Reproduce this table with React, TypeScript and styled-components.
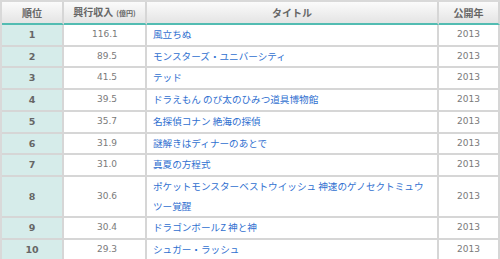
import React from "react";
import styled, { createGlobalStyle } from "styled-components";

const Global = createGlobalStyle`
  html, body { margin: 0; padding: 0; background: #ffffff; }
`;

const Table = styled.table`
  width: 500px;
  border-spacing: 0;
  border-top: 2px solid #d9d9d9;
  border-left: 2px solid #d9d9d9;
  table-layout: fixed;
  font-family: "DejaVu Sans", Verdana, "Noto Sans CJK JP", sans-serif;
  font-size: 9px;
`;

const Th = styled.th<{ $w?: number }>`
  ${(p) => (p.$w ? `width: ${p.$w}px;` : "")}
  height: 20px;
  padding: 0;
  background: linear-gradient(#fbfbfb, #e4e4e4);
  border-right: 2px solid #d6d6d6;
  border-bottom: 2px solid #52bcb2;
  color: #666;
  font-family: "Noto Sans CJK JP", sans-serif;
  font-weight: bold;
  font-size: 10px;
  line-height: 20px;
  text-align: center;
`;

const Small = styled.span`
  font-size: 7px;
  margin-left: 3px;
`;

const Td = styled.td<{ $kind: "rank" | "num" | "title" | "year" }>`
  padding: 0 ${(p) => (p.$kind === "title" ? "6px" : p.$kind === "num" ? "28px" : "0")};
  border-right: 2px solid #d6d6d6;
  border-bottom: 2px solid #d6d6d6;
  line-height: 19.7px;
  vertical-align: middle;
  text-align: ${(p) =>
    p.$kind === "title" ? "left" : p.$kind === "num" ? "right" : "center"};
  background: ${(p) => (p.$kind === "rank" ? "#d6ecea" : "#ffffff")};
  color: ${(p) =>
    p.$kind === "rank" ? "#666" : p.$kind === "title" ? "#2f6fd0" : "#7a7a7a"};
  font-weight: ${(p) => (p.$kind === "rank" ? "bold" : "normal")};
  font-family: ${(p) =>
    p.$kind === "title"
      ? `"Noto Sans CJK JP", sans-serif`
      : `"DejaVu Sans", Verdana, sans-serif`};
  font-size: ${(p) => (p.$kind === "title" ? "9.6px" : p.$kind === "rank" ? "9.5px" : "9px")};
`;

const rows: [number, string, string][] = [
  [1, "116.1", "風立ちぬ"],
  [2, "89.5", "モンスターズ・ユニバーシティ"],
  [3, "41.5", "テッド"],
  [4, "39.5", "ドラえもん のび太のひみつ道具博物館"],
  [5, "35.7", "名探偵コナン 絶海の探偵"],
  [6, "31.9", "謎解きはディナーのあとで"],
  [7, "31.0", "真夏の方程式"],
  [8, "30.6", "ポケットモンスターベストウイッシュ 神速のゲノセクトミュウツー覚醒"],
  [9, "30.4", "ドラゴンボールZ 神と神"],
  [10, "29.3", "シュガー・ラッシュ"],
];

export default function App() {
  return (
    <>
      <Global />
      <Table>
        <thead>
          <tr>
            <Th $w={60}>順位</Th>
            <Th $w={81}>
              興行収入<Small>(億円)</Small>
            </Th>
            <Th>タイトル</Th>
            <Th $w={59}>公開年</Th>
          </tr>
        </thead>
        <tbody>
          {rows.map(([rank, num, title]) => (
            <tr key={rank}>
              <Td $kind="rank">{rank}</Td>
              <Td $kind="num">{num}</Td>
              <Td $kind="title">{title}</Td>
              <Td $kind="year">2013</Td>
            </tr>
          ))}
        </tbody>
      </Table>
    </>
  );
}
